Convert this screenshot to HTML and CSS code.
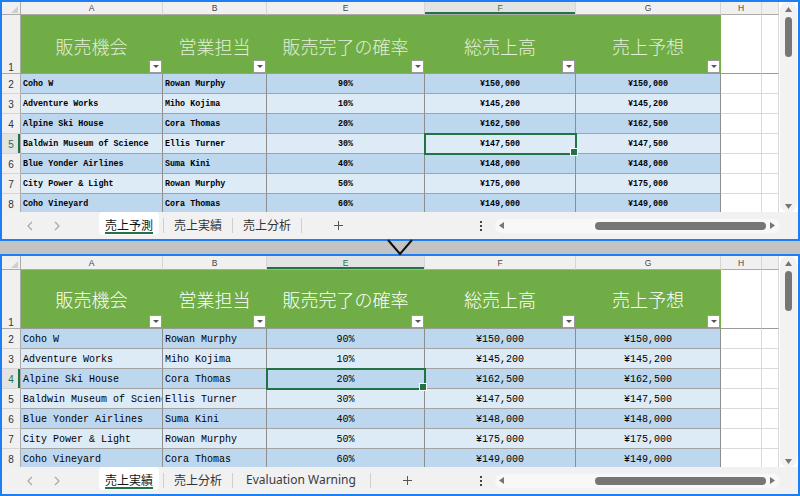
FILE: index.html
```html
<!DOCTYPE html>
<html lang="ja">
<head>
<meta charset="utf-8">
<title>Sheets</title>
<link rel="stylesheet" href="styles.css">
</head>
<body>
<div class="panel panel-top">
  <div class="sheet">
    <div class="grid">
      <div class="corner"></div><div class="hd">A</div><div class="hd">B</div><div class="hd">E</div><div class="hd on">F</div><div class="hd">G</div><div class="hd">H</div><div class="hd"></div>

      <div class="rn r1">1</div>
      <div class="th">販売機会<span class="fb"></span></div>
      <div class="th">営業担当<span class="fb"></span></div>
      <div class="th">販売完了の確率<span class="fb"></span></div>
      <div class="th">総売上高<span class="fb"></span></div>
      <div class="th">売上予想<span class="fb"></span></div>
      <div class="ex hx"></div><div class="ex hx"></div>

      <div class="rn">2</div><div class="td d">Coho W</div><div class="td d">Rowan Murphy</div><div class="td d c">90%</div><div class="td d c">¥150,000</div><div class="td d c">¥150,000</div><div class="ex"></div><div class="ex"></div>
      <div class="rn">3</div><div class="td l">Adventure Works</div><div class="td l">Miho Kojima</div><div class="td l c">10%</div><div class="td l c">¥145,200</div><div class="td l c">¥145,200</div><div class="ex"></div><div class="ex"></div>
      <div class="rn">4</div><div class="td d">Alpine Ski House</div><div class="td d">Cora Thomas</div><div class="td d c">20%</div><div class="td d c">¥162,500</div><div class="td d c">¥162,500</div><div class="ex"></div><div class="ex"></div>
      <div class="rn on">5</div><div class="td l">Baldwin Museum of Science</div><div class="td l">Ellis Turner</div><div class="td l c">30%</div><div class="td l c sel">¥147,500</div><div class="td l c">¥147,500</div><div class="ex"></div><div class="ex"></div>
      <div class="rn">6</div><div class="td d">Blue Yonder Airlines</div><div class="td d">Suma Kini</div><div class="td d c">40%</div><div class="td d c">¥148,000</div><div class="td d c">¥148,000</div><div class="ex"></div><div class="ex"></div>
      <div class="rn">7</div><div class="td l">City Power &amp; Light</div><div class="td l">Rowan Murphy</div><div class="td l c">50%</div><div class="td l c">¥175,000</div><div class="td l c">¥175,000</div><div class="ex"></div><div class="ex"></div>
      <div class="rn">8</div><div class="td d">Coho Vineyard</div><div class="td d">Cora Thomas</div><div class="td d c">60%</div><div class="td d c">¥149,000</div><div class="td d c">¥149,000</div><div class="ex"></div><div class="ex"></div>
    </div>
    <div class="vscroll">
      <div class="vtrack">
        <svg class="varrow" width="7" height="5" viewBox="0 0 7 5"><path d="M3.5 0 L7 5 L0 5 Z"/></svg>
        <span class="vthumb"></span>
        <span class="vspace"></span>
        <svg class="varrow" width="7" height="5" viewBox="0 0 7 5"><path d="M0 0 L7 0 L3.5 5 Z"/></svg>
      </div>
    </div>
  </div>
  <div class="tabbar">
    <div class="tabs">
      <span class="nav first"><svg width="6" height="10" viewBox="0 0 6 10"><path d="M5 1 L1 5 L5 9"/></svg></span>
      <span class="nav"><svg width="6" height="10" viewBox="0 0 6 10"><path d="M1 1 L5 5 L1 9"/></svg></span>
      <span class="tab active"><span class="lbl">売上予測</span></span>
      <span class="sep"></span>
      <span class="tab"><span class="lbl">売上実績</span></span>
      <span class="sep"></span>
      <span class="tab"><span class="lbl">売上分析</span></span>
      <span class="sep"></span>
      <span class="plus"><svg width="9" height="9" viewBox="0 0 9 9"><path d="M4.5 0 V9 M0 4.5 H9"/></svg></span>
    </div>
    <span class="more"><svg width="2" height="10" viewBox="0 0 2 10"><rect x="0" y="0" width="2" height="2"/><rect x="0" y="4" width="2" height="2"/><rect x="0" y="8" width="2" height="2"/></svg></span>
    <div class="htrack">
      <svg class="harrow" width="5" height="7" viewBox="0 0 5 7"><path d="M0 3.5 L5 0 L5 7 Z"/></svg>
      <span class="hthumb"></span>
      <svg class="harrow r" width="5" height="7" viewBox="0 0 5 7"><path d="M0 0 L5 3.5 L0 7 Z"/></svg>
    </div>
  </div>
</div>

<div class="panel panel-bottom">
  <div class="sheet">
    <div class="grid">
      <div class="corner"></div><div class="hd">A</div><div class="hd">B</div><div class="hd on">E</div><div class="hd">F</div><div class="hd">G</div><div class="hd">H</div><div class="hd"></div>

      <div class="rn r1">1</div>
      <div class="th">販売機会<span class="fb"></span></div>
      <div class="th">営業担当<span class="fb"></span></div>
      <div class="th">販売完了の確率<span class="fb"></span></div>
      <div class="th">総売上高<span class="fb"></span></div>
      <div class="th">売上予想<span class="fb"></span></div>
      <div class="ex hx"></div><div class="ex hx"></div>

      <div class="rn">2</div><div class="td d">Coho W</div><div class="td d">Rowan Murphy</div><div class="td d c">90%</div><div class="td d c">¥150,000</div><div class="td d c">¥150,000</div><div class="ex"></div><div class="ex"></div>
      <div class="rn">3</div><div class="td l">Adventure Works</div><div class="td l">Miho Kojima</div><div class="td l c">10%</div><div class="td l c">¥145,200</div><div class="td l c">¥145,200</div><div class="ex"></div><div class="ex"></div>
      <div class="rn on">4</div><div class="td d">Alpine Ski House</div><div class="td d">Cora Thomas</div><div class="td d c sel">20%</div><div class="td d c">¥162,500</div><div class="td d c">¥162,500</div><div class="ex"></div><div class="ex"></div>
      <div class="rn">5</div><div class="td l">Baldwin Museum of Science</div><div class="td l">Ellis Turner</div><div class="td l c">30%</div><div class="td l c">¥147,500</div><div class="td l c">¥147,500</div><div class="ex"></div><div class="ex"></div>
      <div class="rn">6</div><div class="td d">Blue Yonder Airlines</div><div class="td d">Suma Kini</div><div class="td d c">40%</div><div class="td d c">¥148,000</div><div class="td d c">¥148,000</div><div class="ex"></div><div class="ex"></div>
      <div class="rn">7</div><div class="td l">City Power &amp; Light</div><div class="td l">Rowan Murphy</div><div class="td l c">50%</div><div class="td l c">¥175,000</div><div class="td l c">¥175,000</div><div class="ex"></div><div class="ex"></div>
      <div class="rn">8</div><div class="td d">Coho Vineyard</div><div class="td d">Cora Thomas</div><div class="td d c">60%</div><div class="td d c">¥149,000</div><div class="td d c">¥149,000</div><div class="ex"></div><div class="ex"></div>
    </div>
    <div class="vscroll">
      <div class="vtrack">
        <svg class="varrow" width="7" height="5" viewBox="0 0 7 5"><path d="M3.5 0 L7 5 L0 5 Z"/></svg>
        <span class="vthumb"></span>
        <span class="vspace"></span>
        <svg class="varrow" width="7" height="5" viewBox="0 0 7 5"><path d="M0 0 L7 0 L3.5 5 Z"/></svg>
      </div>
    </div>
  </div>
  <div class="tabbar">
    <div class="tabs">
      <span class="nav first"><svg width="6" height="10" viewBox="0 0 6 10"><path d="M5 1 L1 5 L5 9"/></svg></span>
      <span class="nav"><svg width="6" height="10" viewBox="0 0 6 10"><path d="M1 1 L5 5 L1 9"/></svg></span>
      <span class="tab active"><span class="lbl">売上実績</span></span>
      <span class="sep"></span>
      <span class="tab"><span class="lbl">売上分析</span></span>
      <span class="sep"></span>
      <span class="tab wide"><span class="lbl latin">Evaluation Warning</span></span>
      <span class="sep"></span>
      <span class="plus"><svg width="9" height="9" viewBox="0 0 9 9"><path d="M4.5 0 V9 M0 4.5 H9"/></svg></span>
    </div>
    <span class="more"><svg width="2" height="10" viewBox="0 0 2 10"><rect x="0" y="0" width="2" height="2"/><rect x="0" y="4" width="2" height="2"/><rect x="0" y="8" width="2" height="2"/></svg></span>
    <div class="htrack">
      <svg class="harrow" width="5" height="7" viewBox="0 0 5 7"><path d="M0 3.5 L5 0 L5 7 Z"/></svg>
      <span class="hthumb"></span>
      <svg class="harrow r" width="5" height="7" viewBox="0 0 5 7"><path d="M0 0 L5 3.5 L0 7 Z"/></svg>
    </div>
  </div>
</div>

<svg class="chevron" width="28" height="18" viewBox="0 0 28 18"><polyline points="2,2 14,16 26,2"/></svg>
</body>
</html>
```

FILE: styles.css
```css
* { box-sizing: border-box; }
html, body { margin: 0; padding: 0; }
body {
  width: 800px;
  height: 496px;
  background: #c3c3c3;
  position: relative;
  overflow: hidden;
  font-family: "Liberation Sans", Arial, sans-serif;
}

.panel {
  border: 2px solid #1e7ef5;
  background: #fff;
  display: flex;
  flex-direction: column;
  --hh: 13px;
}
.panel-top { height: 241px; }
.panel-bottom { height: 242px; margin-top: 13px; --hh: 14px; }

.sheet {
  flex: 1;
  min-height: 0;
  display: flex;
  overflow: hidden;
}

.grid {
  flex: none;
  width: 777px;
  display: grid;
  grid-template-columns: 19px 142px 104px 158px 151px 145px 41px 17px;
  grid-template-rows: var(--hh) 59px repeat(7, 20px);
  align-self: flex-start;
}

/* column letters */
.hd {
  background: #f0f0f0;
  border-right: 1px solid #d6d6d6;
  border-bottom: 1px solid #ababab;
  font-size: 8.5px;
  color: #444;
  display: flex;
  align-items: center;
  justify-content: center;
}
.hd.on {
  background: #e3e3e3;
  color: #217346;
  box-shadow: inset 0 -2px 0 #217346;
}
.corner {
  background: #f0f0f0;
  border-right: 1px solid #ababab;
  border-bottom: 1px solid #ababab;
  position: relative;
}
.corner::after {
  content: "";
  position: absolute;
  right: 2px;
  bottom: 1px;
  width: 7px;
  height: 7px;
  background: #cfcfcf;
  clip-path: polygon(100% 0, 100% 100%, 0 100%);
}

/* row numbers */
.rn {
  background: #f0f0f0;
  border-right: 1px solid #ababab;
  border-bottom: 1px solid #d6d6d6;
  font-size: 10px;
  color: #333;
  display: flex;
  align-items: center;
  justify-content: center;
  padding-top: 2px;
}
.rn.r1 {
  align-items: flex-end;
  padding-bottom: 0;
  border-bottom-color: #ababab;
}
.rn.on {
  background: #e3e3e3;
  color: #217346;
  box-shadow: inset -2px 0 0 #217346;
}

/* green table header */
.th {
  background: #70ad47;
  border-right: 1px solid transparent;
  border-bottom: 1px solid #9a9a9a;
  position: relative;
  display: flex;
  align-items: center;
  justify-content: center;
  white-space: nowrap;
  font-family: "Noto Sans CJK JP", sans-serif;
  font-size: 18px;
  font-weight: 300;
}
.panel-top .th { color: #e4efd8; padding-top: 3px; }
.panel-bottom .th { color: #ffffff; }

.fb {
  position: absolute;
  right: 0;
  bottom: 0;
  width: 13px;
  height: 13px;
  background: #fff;
  border: 1px solid #9a9a9a;
  display: flex;
  align-items: center;
  justify-content: center;
}
.fb::after {
  content: "";
  border-left: 3px solid transparent;
  border-right: 3px solid transparent;
  border-top: 3px solid #555;
}

/* data cells */
.td {
  border-right: 1px solid #8e8e8e;
  border-bottom: 1px solid #a3a3a3;
  display: flex;
  align-items: center;
  padding: 1px 2px 0;
  white-space: nowrap;
  overflow: hidden;
  color: #000;
  font-family: "Liberation Mono", monospace;
}
.panel-top .td { font-size: 8.4px; font-weight: bold; }
.panel-bottom .td { font-size: 10px; }
.td.c { justify-content: center; }
.td.d { background: #bdd7ee; }
.td.l { background: #ddebf7; }
.td.sel {
  position: relative;
  overflow: visible;
  z-index: 2;
  outline: 2px solid #217346;
  outline-offset: -1px;
}
.td.sel::after {
  content: "";
  position: absolute;
  right: -3px;
  bottom: -3px;
  width: 6px;
  height: 6px;
  background: #217346;
  border: 1px solid #fff;
}

.ex {
  background: #fff;
  border-right: 1px solid #dadada;
  border-bottom: 1px solid #dadada;
}
.ex.hx { border-bottom-color: #9a9a9a; }

/* vertical scrollbar */
.vscroll {
  flex: none;
  width: 19px;
  padding: 0 1px;
  background: #fff;
}
.vtrack {
  height: 100%;
  background: #f2f2f2;
  border-radius: 8px;
  display: flex;
  flex-direction: column;
  align-items: center;
  padding: 5px 0 3px;
}
.varrow { fill: #767676; flex: none; }
.vthumb {
  flex: none;
  width: 7px;
  height: 40px;
  margin-top: 5px;
  border-radius: 4px;
  background: #767676;
}
.vspace { flex: 1; }

/* tab bar */
.tabbar {
  flex: none;
  height: 27px;
  background: #f1f1f1;
  display: flex;
  align-items: center;
}
.tabs {
  flex: none;
  width: 474px;
  height: 100%;
  display: flex;
  align-items: center;
  overflow: hidden;
}
.nav {
  flex: none;
  width: 27px;
  display: flex;
  justify-content: center;
}
.nav.first { margin-left: 14px; }
.nav svg { fill: none; stroke: #a8a8a8; stroke-width: 1.2; }
.tab {
  flex: none;
  align-self: flex-start;
  height: 23px;
  padding: 5px 6px 0;
  border-radius: 4px;
}
.nav + .tab { margin-left: 29px; }
.tab.active { background: #fff; }
.tab.wide { padding: 5px 10px 0 9px; }
.lbl {
  display: block;
  font-family: "Noto Sans CJK JP", sans-serif;
  font-size: 12px;
  line-height: 15px;
  color: #333;
  white-space: nowrap;
  padding-bottom: 0;
  border-bottom: 2px solid transparent;
}
.lbl.latin { font-family: "Noto Sans", "Liberation Sans", sans-serif; color: #3a3a3a; }
.tab.active .lbl { color: #111; border-bottom-color: #217346; }
.sep {
  flex: none;
  width: 1px;
  height: 15px;
  margin: 0 4px;
  background: #cfcfcf;
}
.plus {
  flex: none;
  margin-left: 28px;
  display: flex;
}
.plus svg { fill: none; stroke: #555; stroke-width: 1; }
.more {
  flex: none;
  width: 10px;
  display: flex;
  justify-content: center;
}
.more svg { fill: #444; }
.htrack {
  flex: none;
  width: 285px;
  height: 14px;
  margin-left: 9px;
  border-radius: 7px;
  background: #f8f8f8;
  display: flex;
  align-items: center;
  padding: 0 5px 0 4px;
}
.harrow { flex: none; fill: #767676; }
.harrow.r { margin-left: 4px; }
.hthumb {
  flex: none;
  width: 171px;
  height: 8px;
  margin-left: 91px;
  border-radius: 4px;
  background: #767676;
}

/* splitter chevron between the two views */
.chevron {
  position: absolute;
  left: 386px;
  top: 238px;
  fill: none;
  stroke: #111;
  stroke-width: 2;
}
```
